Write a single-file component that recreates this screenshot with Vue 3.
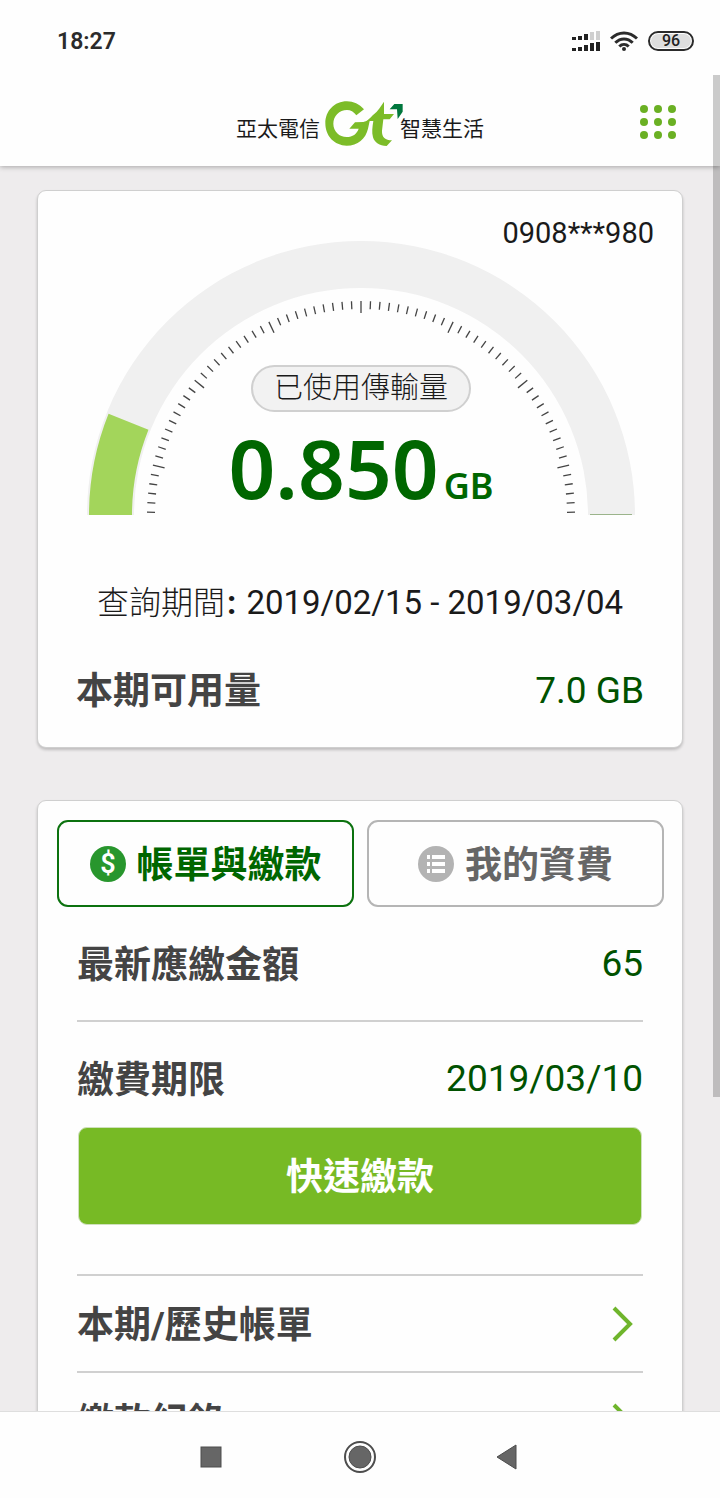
<template>
  <div class="phone">
    <div class="status">
      <span class="time">18:27</span>
      <div class="status-icons">
        <svg width="28" height="20" viewBox="0 0 28 20" aria-hidden="true">
          <rect v-for="(bar, i) in bars" :key="'a' + i" :x="bar.x" :y="9 - bar.h" width="4" :height="bar.h" :fill="i > 2 ? '#cfcfcf' : '#222'"/>
          <rect v-for="(bar, i) in bars" :key="'b' + i" :x="bar.x" :y="20 - bar.h" width="4" :height="bar.h" fill="#222"/>
        </svg>
        <svg width="28" height="20" viewBox="0 0 28 20" fill="none" stroke="#2b2b2b" stroke-width="3" aria-hidden="true">
          <path d="M1 7.500C8.500 0 19.500 0 27 7.500"/>
          <path d="M5.300 11.700C10.500 6.600 17.500 6.600 22.700 11.700"/>
          <path d="M9.300 15.500C12 12.800 16 12.800 18.700 15.500"/>
          <circle cx="14" cy="18" r="2" fill="#2b2b2b" stroke="none"/>
        </svg>
        <span class="battery"><span class="charge">96</span></span>
      </div>
    </div>

    <header class="header">
      <div class="logo">
        <span>亞太電信</span>
        <svg class="mark" viewBox="0 0 240 141" role="img" aria-label="Gt">
          <path fill="#7cbc28" d="M120 28C106 12 88 4 69 4C31 4 4 33 4 70C4 108 31 137 68 137C101 137 125 116 132 86L137 63H148C145 82 143 96 147 112C152 128 166 137 188 138L204 121C184 120 173 112 174 92L178 58H197L210 42H180L180 5C170 18 162 34 148 44C139 52 132 63 118 66L93 67L76 86H104C98 102 86 111 68 111C46 111 28 94 28 71C28 48 46 30 69 30C80 30 89 35 97 46Z"/>
          <path fill="#00773d" d="M211 12H236V35L221 57L219 28H197Z"/>
        </svg>
        <span>智慧生活</span>
      </div>
      <button class="menu" type="button" aria-label="選單">
        <svg width="36" height="34" viewBox="0 0 36 34" fill="#6ab023">
          <circle v-for="n in 9" :key="n" :cx="4 + ((n - 1) % 3) * 14" :cy="4 + Math.floor((n - 1) / 3) * 13" r="4"/>
        </svg>
      </button>
    </header>

    <main class="content">
      <section class="card usage">
        <p class="number">0908***980</p>
        <div class="gauge">
          <svg class="dial" viewBox="0 0 548 275" aria-hidden="true">
            <path :d="sector(274, 227, 0, 180)" fill="#f0f0f0"/>
            <path :d="sector(272, 229, 0, usedAngle)" fill="#a3d55b"/>
            <path d="M503 273.500H545" stroke="#9bb48b" stroke-width="1"/>
            <line v-for="tick in ticks" :key="tick.angle" :x1="tick.x1" :y1="tick.y1" :x2="tick.x2" :y2="tick.y2" stroke="#444" stroke-width="1.300"/>
          </svg>
          <div class="reading">
            <span class="pill">已使用傳輸量</span>
            <p class="amount">{{ used.toFixed(3) }}<span class="unit">GB</span></p>
          </div>
        </div>
        <p class="period"><span class="thin">查詢期間</span><span class="colon">:</span> 2019/02/15 - 2019/03/04</p>
        <div class="row quota">
          <span class="label">本期可用量</span>
          <span class="value">{{ total.toFixed(1) }} GB</span>
        </div>
      </section>

      <section class="card billing">
        <div class="tabs">
          <button type="button" :class="{ active: tab === 'bill' }" @click="tab = 'bill'">
            <svg width="36" height="36" viewBox="0 0 36 36" aria-hidden="true">
              <circle cx="18" cy="18" r="18" fill="#28962d"/>
              <text x="18" y="27" text-anchor="middle" class="dollar">$</text>
            </svg>
            <span class="tab-text">帳單與繳款</span>
          </button>
          <button type="button" :class="{ active: tab === 'plan' }" @click="tab = 'plan'">
            <svg width="36" height="36" viewBox="0 0 36 36" aria-hidden="true">
              <circle cx="18" cy="18" r="18" fill="#b3b3b3"/>
              <path d="M9 9H12V13H9ZM14 9H27V13H14ZM9 16H12V20H9ZM14 16H27V20H14ZM9 23H12V27H9ZM14 23H27V27H14Z" fill="#fff"/>
            </svg>
            <span class="tab-text">我的資費</span>
          </button>
        </div>
        <div class="row due">
          <span class="label">最新應繳金額</span>
          <span class="value">65</span>
        </div>
        <div class="row deadline">
          <span class="label">繳費期限</span>
          <span class="value">2019/03/10</span>
        </div>
        <button class="pay" type="button">快速繳款</button>
        <a v-for="link in links" :key="link" class="row link" href="#">
          <span class="label">{{ link }}</span>
          <svg width="22" height="36" viewBox="0 0 22 36" fill="none" stroke="#6fb52c" stroke-width="4" aria-hidden="true">
            <path d="M2 2L18 18L2 34"/>
          </svg>
        </a>
      </section>
    </main>

    <nav class="keys">
      <button type="button" aria-label="最近">
        <svg width="36" height="36" viewBox="0 0 36 36"><rect x="7" y="8" width="20" height="20" fill="#666" stroke="#4d4d4d"/></svg>
      </button>
      <button type="button" aria-label="首頁">
        <svg width="36" height="36" viewBox="0 0 36 36">
          <circle cx="18" cy="18" r="15" fill="none" stroke="#4d4d4d" stroke-width="2"/>
          <circle cx="18" cy="18" r="11" fill="#666" stroke="#4d4d4d"/>
        </svg>
      </button>
      <button type="button" aria-label="返回">
        <svg width="36" height="36" viewBox="0 0 36 36"><path d="M7 18L26 6V30Z" fill="#666" stroke="#4d4d4d"/></svg>
      </button>
    </nav>

    <div class="scrollbar"></div>
  </div>
</template>

<script setup>
import { ref, computed } from "vue";

// properties
const used = ref(0.85),
    total = ref(7),
    tab = ref("bill"),
    links = ["本期/歷史帳單", "繳款紀錄"],
    bars = [3, 4, 6, 8, 9].map((h, i) => ({ x: i * 6, h }))

const usedAngle = computed(() => (used.value / total.value) * 180)

// 0 degrees is the left end of the dial, 180 the right end
const point = (r, angle) => {
    const rad = (angle * Math.PI) / 180
    return [274 - r * Math.cos(rad), 274 - r * Math.sin(rad)]
}

const sector = (outer, inner, from, to) => {
    return `M${point(outer, from)}A${outer} ${outer} 0 0 1 ${point(outer, to)}` +
        `L${point(inner, to)}A${inner} ${inner} 0 0 0 ${point(inner, from)}Z`
}

// every tenth tick, counted from the top, is a long one
const ticks = []
for (let i = -35; i <= 35; i++) {
    const angle = 90 + i * 2.55
    const [x1, y1] = point(214, angle)
    const [x2, y2] = point(i % 10 === 0 ? 202 : 206, angle)
    ticks.push({ angle, x1, y1, x2, y2 })
}
</script>

<style>
body {
  margin: 0;
}
</style>

<style scoped>
.phone {
  position: relative;
  display: flex;
  flex-direction: column;
  height: 100vh;
  overflow: hidden;
  background: #eeeced;
  color: #1a1a1a;
  font-family: Roboto, "Noto Sans CJK TC", sans-serif;
}
p {
  margin: 0;
}
button {
  font-family: inherit;
  background: none;
  border: 0;
  padding: 0;
  cursor: pointer;
}
svg {
  display: block;
  flex: none;
}
.status {
  position: relative;
  z-index: 2;
  display: flex;
  flex: none;
  align-items: center;
  justify-content: space-between;
  height: 82px;
  padding: 0 26px 0 57px;
  background: #fefefe;
}
.time {
  font-size: 23px;
  font-weight: 600;
  color: #2b2b2b;
}
.status-icons {
  display: flex;
  align-items: center;
  gap: 10px;
}
.battery {
  box-sizing: border-box;
  width: 46px;
  height: 20px;
  padding: 1px;
  border: 2px solid #2b2b2b;
  border-radius: 10px;
}
.charge {
  display: block;
  border-radius: 7px;
  background: #dedede;
  color: #222;
  font-size: 16px;
  font-weight: 500;
  line-height: 14px;
  text-align: center;
}
.header {
  position: relative;
  z-index: 1;
  display: grid;
  grid-template-columns: 1fr auto 1fr;
  box-sizing: border-box;
  flex: none;
  align-items: center;
  height: 84px;
  padding: 0 44px 4px;
  background: #fefefe;
  box-shadow: 0 1px 5px rgba(0, 0, 0, 0.3);
}
.logo {
  display: flex;
  grid-column: 2;
  align-items: center;
  font-size: 21px;
  line-height: 30px;
}
.logo span {
  padding-top: 14px;
}
.mark {
  width: 80px;
  height: 47px;
  margin: 2px -4px 0 4px;
}
.menu {
  justify-self: end;
}
.content {
  flex: 1;
  min-height: 0;
  overflow: hidden;
  padding: 24px 37px 0;
}
.card {
  border: 1px solid #cfcfcf;
  border-radius: 9px;
  background: #fefefe;
  box-shadow: 0 2px 3px rgba(0, 0, 0, 0.2);
}
.usage {
  padding: 24px 38px 15px;
}
.number {
  margin: 0 -10px -10px 0;
  font-size: 29px;
  line-height: 36px;
  text-align: right;
}
.gauge {
  display: grid;
  padding: 0 9px 0 11px;
}
.dial,
.reading {
  grid-area: 1 / 1;
}
.dial {
  width: 100%;
}
.reading {
  display: flex;
  flex-direction: column;
  align-items: center;
  justify-content: flex-end;
}
.pill {
  padding: 0 21px;
  border: 2px solid #d0d0d0;
  border-radius: 24px;
  background: #f2f2f2;
  font-size: 29px;
  font-weight: 300;
  line-height: 43px;
}
.amount {
  margin-top: 25px;
  color: #060;
  font-family: "Noto Sans", "Open Sans", sans-serif;
  font-size: 82px;
  font-weight: 600;
  line-height: 60px;
}
.unit {
  margin-left: 5px;
  font-size: 36px;
}
.period {
  margin-top: 63px;
  font-size: 33px;
  line-height: 48px;
  text-align: center;
  white-space: nowrap;
}
.thin {
  font-size: 32px;
  font-weight: 300;
}
.colon {
  padding: 0 2px;
  font-weight: 700;
}
.row {
  display: flex;
  align-items: center;
  justify-content: space-between;
  font-size: 37px;
}
.label {
  padding-bottom: 4px;
  color: #444;
  font-weight: 700;
}
.value {
  color: #005200;
}
.quota {
  height: 84px;
  margin-top: 21px;
}
.billing {
  margin-top: 52px;
  padding: 19px 18px 19px 19px;
}
.tabs {
  display: grid;
  grid-template-columns: 1fr 1fr;
  gap: 13px;
}
.tabs button {
  display: flex;
  align-items: center;
  justify-content: center;
  gap: 11px;
  height: 87px;
  border: 2px solid #b5b5b5;
  border-radius: 11px;
  color: #666;
  font-size: 37px;
  font-weight: 700;
  white-space: nowrap;
}
.tabs .active {
  border-color: #0c720f;
  color: #060;
}
.tab-text {
  padding-bottom: 4px;
}
.dollar {
  fill: #fff;
  font-size: 27px;
  font-weight: 600;
}
.billing .row {
  margin: 0 21px 0 20px;
}
.due {
  height: 113px;
  border-bottom: 2px solid #d0d0d0;
}
.deadline {
  height: 97px;
  padding-top: 8px;
}
.pay {
  display: block;
  box-sizing: border-box;
  width: calc(100% - 43px);
  height: 98px;
  margin: 0 21px 49px;
  padding-bottom: 4px;
  border: 1px solid #cfe0bd;
  border-radius: 9px;
  background: #77ba25;
  color: #fff;
  font-size: 37px;
  font-weight: 700;
}
.link {
  height: 95px;
  padding-right: 9px;
  border-top: 2px solid #d0d0d0;
  text-decoration: none;
}
.keys {
  display: flex;
  flex: none;
  align-items: center;
  justify-content: center;
  gap: 112px;
  height: 86px;
  border-top: 1px solid #dedede;
  background: #fefefe;
}
.keys button {
  margin-top: 4px;
}
.scrollbar {
  position: absolute;
  z-index: 2;
  top: 75px;
  right: 0;
  width: 7px;
  height: 1022px;
  background: rgba(0, 0, 0, 0.2);
}
</style>
